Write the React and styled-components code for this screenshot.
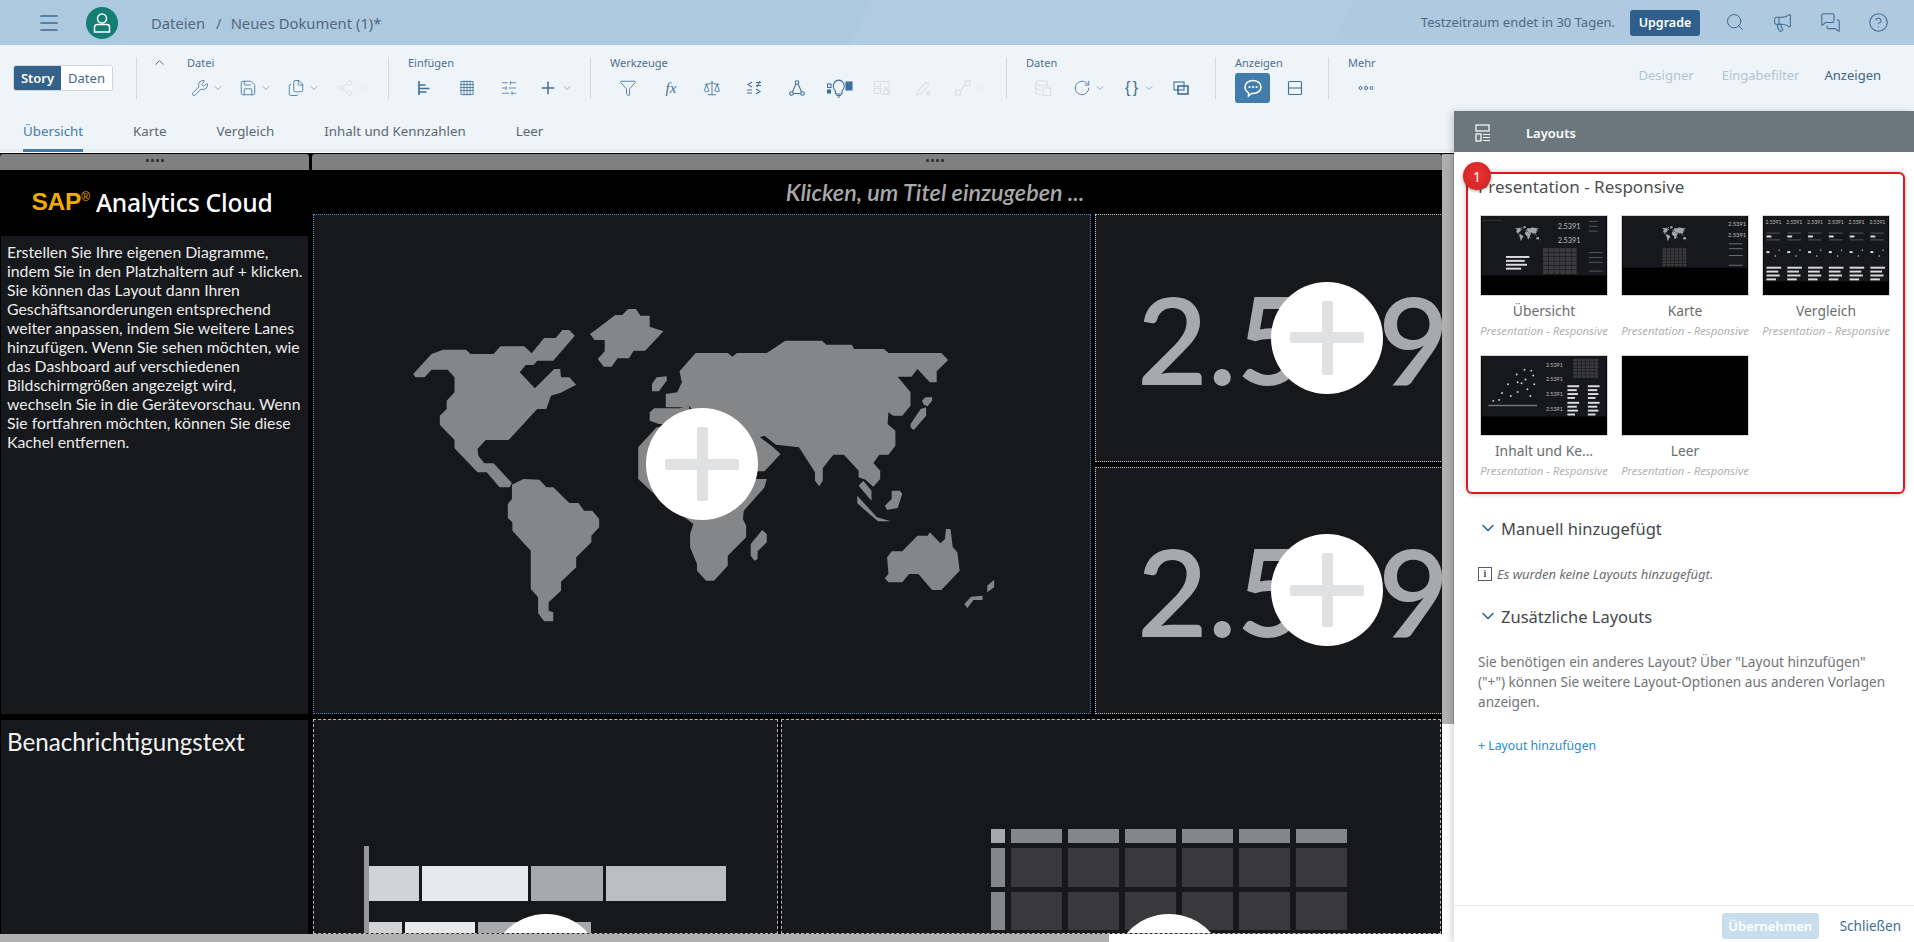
import styled, { createGlobalStyle } from "styled-components";
import {
  ChevronDown,
  ChevronUp,
  CircleHelp,
  Files,
  Menu,
  Megaphone,
  MessagesSquare,
  Plus,
  Save,
  Search,
  Share2,
  Scale,
  SlidersHorizontal,
  Wrench,
  Funnel,
  RotateCw,
} from "lucide-react";

const UI_FONT = `"Noto Sans", "Open Sans", sans-serif`;
const CANVAS_FONT = `Lato, "Noto Sans", sans-serif`;

const GlobalStyle = createGlobalStyle`
  html, body {
    margin: 0;
    padding: 0;
    background: #fff;
    font-family: ${UI_FONT};
    overflow: hidden;
  }
  * { box-sizing: border-box; }
`;

const continents = [
  "220,280 260,220 285,207 335,207 345,220 395,220 410,197 462,197 478,218 505,172 530,172 545,148 560,148 572,165 525,240 490,240 482,253 465,253 452,275 485,323 527,265 540,265 542,290 560,290 575,312 540,337 520,345 510,385 490,385 428,478 378,478 360,505 362,525 375,548 395,548 435,607 430,620 408,620 380,575 360,575 310,503 310,478 278,432 278,405 293,385 293,360 310,335 310,290 295,267 260,267 245,290 225,290",
  "605,160 625,140 660,103 675,103 688,85 705,85 715,105 735,105 735,138 765,152 725,210 700,210 690,233 665,233 652,258 635,258 622,235 637,212 637,178 615,178",
  "435,612 460,595 495,597 510,620 525,620 560,667 580,667 592,690 610,690 625,715 625,740 608,765 608,785 575,830 575,860 542,903 542,930 515,965 515,990 525,995 525,1022 505,1022 492,997 492,950 476,925 476,810 436,750 436,725 426,712 426,670 435,655",
  "800,272 835,217 905,217 915,228 925,217 990,217 1030,180 1110,180 1120,192 1175,192 1180,205 1245,205 1255,217 1370,217 1385,238 1360,272 1360,305 1345,305 1318,265 1305,288 1275,288 1303,335 1303,375 1285,405 1265,405 1255,395 1253,430 1270,450 1270,495 1255,522 1235,522 1222,547 1237,570 1237,595 1222,618 1205,597 1190,590 1190,570 1158,522 1135,522 1112,562 1112,600 1104,617 1095,600 1095,575 1060,500 1010,492 985,465 975,470 1000,495 1020,520 985,572 960,572 900,500 850,420 820,375 810,380 770,380 770,340 795,335 805,305",
  "735,395 745,383 800,383 820,375 830,430 755,430 735,420",
  "750,440 710,500 710,595 745,640 830,730 823,760 823,800 838,850 838,870 858,900 875,900 905,855 905,825 945,770 945,735 938,715 940,690 985,620 990,595 965,595 900,500 800,430",
  "740,310 750,290 772,287 772,300 755,332 740,332",
  "1328,360 1335,350 1350,350 1350,360 1340,377 1332,372",
  "1303,430 1325,385 1337,380 1337,405 1310,448 1303,440",
  "1200,600 1218,630 1218,660 1190,615",
  "1187,645 1230,710 1260,722 1232,722 1187,668",
  "1247,675 1262,655 1262,630 1280,630 1285,640 1275,682 1252,688",
  "955,790 980,748 990,760 990,785 970,812 970,835 963,840 955,825",
  "1252,830 1262,812 1285,812 1318,765 1340,765 1345,755 1368,788 1378,775 1380,745 1390,745 1395,800 1405,815 1410,870 1370,928 1350,928 1320,880 1300,880 1285,905 1255,905 1247,893 1255,880",
  "1420,970 1435,948 1460,945 1460,958 1440,958 1427,982",
  "1470,935 1470,915 1485,897 1485,920",
];

const Page = styled.div`
  width: 1914px;
  height: 942px;
  display: flex;
  flex-direction: column;
  overflow: hidden;
  background: #fff;
`;

const TopBar = styled.header`
  height: 45px;
  flex: none;
  display: flex;
  align-items: center;
  padding-left: 37px;
  background: linear-gradient(115deg, #adc9e0 0 45%, #b1cbe2 45% 70%, #aec9e0 70%);
  color: #50687f;
  font-size: 14.8px;
`;

const MenuBtn = styled.span`
  display: flex;
  color: #3f6a90;
  margin-right: 25px;
`;

const Avatar = styled.span`
  width: 32px;
  height: 32px;
  border-radius: 50%;
  background: #147d74;
  color: #fff;
  display: flex;
  align-items: center;
  justify-content: center;
  margin-right: 33px;
`;

const Crumb = styled.span`
  margin-right: ${(p) => p.$gap || 0}px;
  color: #53687c;
`;

const TopRight = styled.div`
  margin-left: auto;
  display: flex;
  align-items: center;
  color: #4e6a85;
`;

const Trial = styled.span`
  font-size: 13px;
  margin-right: 15px;
  margin-top: -2px;
`;

const UpgradeBtn = styled.button`
  width: 70px;
  height: 26px;
  border: 0;
  border-radius: 3px;
  background: #2f5f8a;
  color: #fff;
  font: 600 12.5px ${UI_FONT};
  margin-right: 25px;
`;

const TopIcons = styled.div`
  display: flex;
  gap: 27px;
  margin-right: 25px;
  color: #3f6a90;
`;

const Toolbar = styled.div`
  height: 66px;
  flex: none;
  display: flex;
  background: #eff4f9;
  padding-top: 10px;
`;

const Segmented = styled.div`
  display: flex;
  height: 26px;
  margin: 10px 23px 0 13px;
  width: 100px;
  border: 1px solid #cfd6dc;
  border-radius: 3px;
  overflow: hidden;
  font-size: 13px;
`;

const SegItem = styled.span`
  flex: ${(p) => (p.$active ? "0 0 47px" : "1")};
  display: flex;
  align-items: center;
  justify-content: center;
  background: ${(p) => (p.$active ? "#346187" : "#fff")};
  color: ${(p) => (p.$active ? "#fff" : "#3f6a90")};
  font-weight: ${(p) => (p.$active ? 600 : 400)};
`;

const ToolGroup = styled.section`
  width: ${(p) => p.$w}px;
  flex: none;
  height: 42px;
  margin-top: 2px;
  border-left: 1px solid #d3dae0;
  padding-left: ${(p) => p.$pad || 19}px;
  position: relative;
`;

const GroupLabel = styled.div`
  font-size: 11px;
  line-height: 12px;
  color: #4e6f8f;
  height: 15px;
  margin-top: -2px;
  display: flex;
  align-items: center;
`;

const Caret = styled.span`
  display: flex;
  color: #3f6a90;
  width: 35px;
  margin-left: -4px;
`;

const IconRow = styled.div`
  display: flex;
  align-items: center;
  height: 32px;
  margin-top: 2px;
  margin-left: ${(p) => p.$x}px;
`;

const Slot = styled.span`
  width: ${(p) => p.$w}px;
  flex: none;
  display: flex;
  align-items: center;
  gap: 3px;
  color: ${(p) => (p.$off ? "#d8e0e8" : "#3f6f9a")};

  svg {
    flex: none;
  }
`;

const SlotText = styled.span`
  width: 18px;
  text-align: center;
  white-space: nowrap;
  font: ${(p) => (p.$italic ? "italic" : "normal")} 15px "Liberation Serif", serif;
  line-height: 18px;
`;

const BraceText = styled.span`
  width: 18px;
  text-align: center;
  white-space: nowrap;
  font: 16px/18px "Liberation Sans", sans-serif;
  letter-spacing: -1px;
`;

const ActiveBtn = styled.span`
  width: 35px;
  height: 30px;
  border-radius: 3px;
  background: #427cac;
  color: #fff;
  display: flex;
  align-items: center;
  justify-content: center;
  margin-right: 16px;
`;

const ModeLinks = styled.nav`
  margin-left: auto;
  display: flex;
  gap: 28px;
  padding: 11px 33px 0 0;
  font-size: 13px;
`;

const ModeLink = styled.span`
  color: ${(p) => (p.$on ? "#3e6587" : "#b3c3d1")};
  margin-right: ${(p) => p.$mr || 0}px;
`;

const Workspace = styled.div`
  flex: 1;
  min-height: 0;
  display: flex;
`;

const Main = styled.main`
  width: 1454px;
  flex: none;
  display: flex;
  flex-direction: column;
`;

const Tabs = styled.div`
  height: 41px;
  flex: none;
  display: flex;
  gap: 50px;
  padding-left: 23px;
  background: #eff4f9;
  font-size: 13.3px;
  border-bottom: 3px solid #e3ecf2;
`;

const Tab = styled.span`
  height: 41px;
  line-height: 40px;
  color: ${(p) => (p.$active ? "#427cac" : "#5b6770")};
  border-bottom: ${(p) => (p.$active ? "3px solid #427cac" : "0")};
`;

const CanvasArea = styled.div`
  flex: 1;
  min-height: 0;
  display: flex;
  flex-direction: column;
  background: #000;
  border-top: 1px solid #fff;
`;

const CanvasRow = styled.div`
  flex: 1;
  min-height: 0;
  display: flex;
  padding-top: 1px;
`;

const Lanes = styled.div`
  width: 1442px;
  flex: none;
  display: flex;
  gap: 3px;
  overflow: hidden;
`;

const Lane = styled.div`
  width: ${(p) => p.$w}px;
  flex: none;
  display: flex;
  flex-direction: column;
  overflow: hidden;
`;

const LaneHandle = styled.div`
  height: 16px;
  flex: none;
  background: #808080;
  border-radius: 3px 3px 0 0;
  display: flex;
  align-items: center;
  justify-content: center;
  gap: 2px;
  padding-bottom: 3px;
  padding-left: ${(p) => p.$shift || 0}px;
`;

const HandleDot = styled.i`
  width: 3px;
  height: 3px;
  background: #333;
  border-radius: 1px;
`;

const LogoBand = styled.div`
  height: 66px;
  flex: none;
  background: #000;
  display: flex;
  align-items: center;
  justify-content: center;
  padding: 0 5px 2px 0;
  margin: 0 1px;
  color: #fff;
  font: 500 24.6px "Noto Sans", sans-serif;
  letter-spacing: -0.2px;
`;

const SapMark = styled.span`
  color: #f0ab00;
  font: 700 24.5px "Liberation Sans", sans-serif;
  margin-right: 6px;

  sup {
    font-size: 12px;
    line-height: 0;
    font-weight: 400;
    vertical-align: 9px;
  }
`;

const DarkBlock = styled.div`
  background: #16181b;
  flex: ${(p) => (p.$grow ? 1 : "none")};
  height: ${(p) => (p.$h ? `${p.$h}px` : "auto")};
  margin: 0 1px;
  padding: ${(p) => p.$pad || "6px 3px 6px 6px"};
  color: #ececec;
  font: 15.8px/19px ${CANVAS_FONT};
`;

const NoticeTitle = styled.div`
  font: 24.2px/28px ${CANVAS_FONT};
  color: #f2f2f2;
`;

const Divider = styled.div`
  height: 6px;
  flex: none;
  background: #000;
`;

const TitleBand = styled.div`
  height: 44px;
  flex: none;
  background: #000;
  display: flex;
  align-items: center;
  justify-content: center;
  padding-left: 116px;
  color: #a8a9ab;
  font: italic 600 23.4px ${CANVAS_FONT};
`;

const TopCells = styled.div`
  height: 500px;
  flex: none;
  display: flex;
  gap: 4px;
`;

const MapCell = styled.div`
  width: 778px;
  flex: none;
  margin-left: 1px;
  background: #16181b;
  border: 1px dotted #4a8cc0;
  display: flex;
  align-items: center;
  justify-content: center;
  position: relative;
`;

const SideCol = styled.div`
  width: 420px;
  flex: none;
  display: flex;
  flex-direction: column;
  gap: 5px;
`;

const SideCell = styled.div`
  flex: 1;
  background: #16181b;
  border: 1px dotted #c8c8c8;
  display: flex;
  align-items: center;
  padding-left: 41px;
  position: relative;
  overflow: hidden;
`;

const BigNumber = styled.span`
  font: 600 122px/1 ${CANVAS_FONT};
  color: #a7a9ac;
  white-space: nowrap;
`;

const AddBubble = styled.div`
  position: absolute;
  width: 112px;
  height: 112px;
  border-radius: 50%;
  background: #fff;
  left: ${(p) => p.$left};
  top: ${(p) => p.$top};
  transform: translate(-50%, -50%);
  color: #e0e1e3;
  display: flex;
  align-items: center;
  justify-content: center;

  &::before,
  &::after {
    content: "";
    position: absolute;
    background: currentColor;
    border-radius: 2px;
  }
  &::before {
    width: 74px;
    height: 11px;
  }
  &::after {
    width: 11px;
    height: 74px;
  }
`;

const BottomCells = styled.div`
  flex: 1;
  min-height: 0;
  display: flex;
  gap: 3px;
  padding-top: 5px;
`;

const ChartCell = styled.div`
  width: ${(p) => p.$w}px;
  flex: none;
  margin-left: ${(p) => p.$ml || 0}px;
  background: #16181b;
  border: 1px dashed #b5b5b5;
  padding: ${(p) => p.$pad};
  position: relative;
  overflow: hidden;
`;

const BarChart = styled.div`
  height: 200px;
  border-left: 5px solid #969696;
  padding-top: 20px;
  display: flex;
  flex-direction: column;
  gap: 21px;
`;

const BarRow = styled.div`
  display: flex;
  gap: 3px;
  height: 35px;
  flex: none;
`;

const BarSeg = styled.span`
  width: ${(p) => p.$w}px;
  flex: none;
  background: ${(p) => p.$c};
`;

const MiniTable = styled.div`
  display: grid;
  grid-template-columns: 14px repeat(6, 51px);
  grid-template-rows: 14px 39px 38px;
  gap: 5px 6px;
`;

const TableCell = styled.span`
  background: ${(p) => p.$c};
`;

const HScroll = styled.div`
  height: 8px;
  flex: none;
  background: linear-gradient(90deg, #b0b0b0 0 1109px, #fff 1109px);
`;

const VScroll = styled.div`
  width: 12px;
  flex: none;
  background: #fff;
`;

const VThumb = styled.div`
  height: 570px;
  background: #b0b0b0;
  border-right: 1px solid #999;
`;

const Panel = styled.aside`
  flex: 1;
  display: flex;
  flex-direction: column;
  background: #fff;
  box-shadow: -3px 0 6px rgba(0, 0, 0, 0.15);
  z-index: 1;
`;

const PanelHeader = styled.div`
  height: 41px;
  flex: none;
  background: #6c777d;
  color: #fff;
  display: flex;
  align-items: center;
  padding: 2px 0 0 21px;
  font-size: 13px;
  font-weight: 600;
  gap: 35px;
`;

const PanelBody = styled.div`
  flex: 1;
  padding: 20px 9px 0 12px;
`;

const RedBox = styled.div`
  height: 322px;
  position: relative;
  border: 2px solid #e6141c;
  border-radius: 6px;
  box-shadow: 0 0 5px rgba(0, 0, 0, 0.25);
  padding: 1px 0 0 10px;
`;

const Badge = styled.span`
  position: absolute;
  left: -5px;
  top: -12px;
  width: 28px;
  height: 28px;
  border-radius: 50%;
  background: radial-gradient(circle at 50% 45%, #e83333, #cf1f1f);
  box-shadow: 0 1px 3px rgba(0, 0, 0, 0.4);
  color: #fff;
  font-size: 14px;
  display: flex;
  align-items: center;
  justify-content: center;
`;

const BoxTitle = styled.h3`
  margin: 0 0 16px;
  font-size: 17px;
  line-height: 24px;
  font-weight: 400;
  color: #4b4f52;
`;

const ThumbGrid = styled.div`
  display: grid;
  grid-template-columns: repeat(3, 128px);
  grid-auto-rows: 140px;
  column-gap: 13px;
  margin-left: 2px;
`;

const ThumbCard = styled.div`
  text-align: center;
`;

const ThumbFrame = styled.svg`
  display: block;
  width: 128px;
  height: 81px;
  border: 1px solid #d5d5d5;
  background: #000;
`;

const ThumbName = styled.div`
  font-size: 13.8px;
  line-height: 18px;
  margin-top: 6px;
  color: #6a6d70;
  white-space: nowrap;
`;

const ThumbSub = styled.div`
  font-size: 11.3px;
  line-height: 14px;
  margin-top: 4px;
  font-style: italic;
  color: #b0b2b4;
  white-space: nowrap;
`;

const SectionHead = styled.div`
  display: flex;
  align-items: center;
  gap: 3px;
  margin-left: ${(p) => p.$ml || 0}px;
  margin-top: ${(p) => p.$mt}px;
  height: 26px;
  font-size: 16.5px;
  color: #45494c;

  svg {
    color: #2f5f8a;
    flex: none;
  }
`;

const Indented = styled.div`
  padding-left: 12px;
`;

const InfoLine = styled.div`
  display: flex;
  align-items: center;
  gap: 5px;
  margin-top: 24px;
  height: 18px;
  font-size: 13px;
  font-style: italic;
  color: #6a6d70;
`;

const InfoBox = styled.span`
  width: 14px;
  height: 14px;
  border: 1px solid #5a5e61;
  font: 700 10px/12px "Liberation Serif", serif;
  font-style: normal;
  text-align: center;
  color: #45494c;
`;

const HelpText = styled.p`
  margin: 23px 0 0;
  font-size: 13.6px;
  line-height: 20px;
  color: #717477;
`;

const AddLink = styled.div`
  margin-top: 25px;
  font-size: 12.3px;
  line-height: 18px;
  color: #2a8bd0;
`;

const PanelFooter = styled.div`
  height: 37px;
  flex: none;
  border-top: 1px solid #e4e6e8;
  display: flex;
  align-items: center;
  justify-content: flex-end;
  gap: 21px;
  padding: 3px 13px 0 0;
  font-size: 13.5px;
`;

const ApplyBtn = styled.button`
  width: 97px;
  height: 26px;
  border: 0;
  border-radius: 3px;
  background: #c9dded;
  color: #fff;
  font: 600 13px ${UI_FONT};
`;

const CloseLink = styled.span`
  color: #3a6d97;
`;

const Person = () => (
  <svg width="20" height="22" viewBox="0 0 20 22" fill="none" stroke="currentColor" strokeWidth="1.5">
    <circle cx="10" cy="6.5" r="4.5" />
    <path d="M5 12.5 h10 a2.5 2.5 0 0 1 2.5 2.5 v5 h-15 v-5 a2.5 2.5 0 0 1 2.5-2.5z" />
  </svg>
);

const Line = ({ children, size = 18, w = 1.1 }) => (
  <svg width={size} height={size} viewBox="0 0 18 18" fill="none" stroke="currentColor" strokeWidth={w}>
    {children}
  </svg>
);

const Chev = () => <ChevronDown size={12} strokeWidth={1} />;

const SlotIcon = ({ icon: Icon, chev }) => (
  <>
    <Icon size={18} strokeWidth={1.1} />
    {chev && <Chev />}
  </>
);

const BarsIcon = () => (
  <Line>
    <path d="M4 2v14M4.5 6h6M4.5 9.5h10M4.5 13h7" strokeWidth="1.6" />
  </Line>
);

const GridIcon = () => (
  <Line w={0.8}>
    <rect x="3" y="2.5" width="12" height="13" />
    <path d="M6 1.5v15M9 1.5v15M12 1.5v15M2 5.5h14M2 8.5h14M2 11.5h14" />
  </Line>
);

const NodesIcon = () => (
  <Line>
    <circle cx="9" cy="3.5" r="1.8" />
    <circle cx="3.5" cy="14.5" r="1.8" />
    <circle cx="14.5" cy="14.5" r="1.8" />
    <path d="M8 5l-3.6 8M10 5l3.6 8M5.3 14.5h7.4" />
  </Line>
);

const CompareIcon = () => (
  <Line>
    <path d="M7 3L3 5.5L7 8M11 3.5h5M11 6.5h5M15 2l-3 6M2 11h5M2 14h5M11 10l4 2.5l-4 2.5" />
  </Line>
);

const InsightIcon = () => (
  <svg width="26" height="20" viewBox="0 0 26 20" fill="none" stroke="currentColor" strokeWidth="1.1">
    <rect x="0.5" y="6" width="3.5" height="3.5" />
    <rect x="0.5" y="12" width="3" height="3" fill="currentColor" />
    <path d="M8.5 13a5.5 6 0 1 1 6.5 0v3h-6.5zM9.5 17.5h4.5M10.5 19h2.5" />
    <rect x="19" y="4" width="6" height="8" fill="currentColor" />
  </svg>
);

const TileLockIcon = () => (
  <Line>
    <rect x="1.5" y="2.5" width="6" height="5" />
    <rect x="1.5" y="9.5" width="6" height="5" />
    <path d="M9 2.5h7v13h-7M11 11h4v4h-4zM12 11v-2a1 1 0 0 1 2 0v2" />
  </Line>
);

const PenOffIcon = () => (
  <Line>
    <path d="M3 16l1-4 8-9 3 2.5-8 9zM12 12l4 4M16 12l-4 4" />
  </Line>
);

const LinkBoxesIcon = () => (
  <Line>
    <rect x="1.5" y="11" width="5" height="5" />
    <rect x="11" y="2" width="5" height="5" />
    <path d="M6.5 12l4.5-6" />
  </Line>
);

const DbIcon = () => (
  <Line>
    <ellipse cx="7.5" cy="4" rx="6" ry="2.5" />
    <path d="M1.5 4v9c0 1.5 2.5 2.5 5 2.5M1.5 8.5c0 1.5 3 2.5 6 2.5M13.5 4v4" />
    <rect x="9" y="9" width="7.5" height="7.5" />
  </Line>
);

const OverlapIcon = () => (
  <Line>
    <rect x="2" y="3" width="10" height="8" />
    <rect x="6" y="7" width="10" height="8" strokeWidth="1.6" />
  </Line>
);

const SplitIcon = () => (
  <Line>
    <rect x="2.5" y="2.5" width="13" height="13" rx="1" />
    <path d="M2.5 9h13" />
  </Line>
);

const CommentIcon = () => (
  <svg width="20" height="20" viewBox="0 0 20 20" fill="none" stroke="currentColor" strokeWidth="1.5">
    <path d="M10 2.5c4.5 0 8 2.7 8 6.5s-3.5 6.5-8 6.5h-1.5l-3 2.5v-3.3C3.5 13.5 2 11.5 2 9c0-3.8 3.5-6.5 8-6.5z" />
    <path d="M6.5 9h.1M10 9h.1M13.5 9h.1" strokeWidth="2.2" strokeLinecap="round" />
  </svg>
);

const DotsIcon = () => (
  <svg width="18" height="18" viewBox="0 0 18 18" fill="none" stroke="currentColor" strokeWidth="1">
    <circle cx="3.5" cy="9" r="1.5" />
    <circle cx="9" cy="9" r="1.5" />
    <circle cx="14.5" cy="9" r="1.5" />
  </svg>
);

const PanelLayoutIcon = () => (
  <svg width="16" height="18" viewBox="0 0 16 18" fill="none" stroke="currentColor" strokeWidth="1.2">
    <rect x="1" y="1" width="13" height="6" />
    <rect x="1" y="10" width="5" height="7" />
    <path d="M8 10.5h7M8 13.5h7M8 16.5h7" />
  </svg>
);

const MiniMap = ({ x, y, w, h }) => (
  <svg x={x} y={y} width={w} height={h} viewBox="200 70 1300 960" preserveAspectRatio="none">
    {continents.map((pts) => (
      <polygon key={pts} points={pts} fill="#a5a6a8" />
    ))}
  </svg>
);

const MiniNum = ({ x, y, size = 7.5 }) => (
  <text x={x} y={y} fontSize={size} fill="#bdbec0" fontFamily="Lato, sans-serif">
    2.5391
  </text>
);

const MiniGrid = ({ x, y, w, h }) => {
  const cells = [];
  const cols = 6;
  const rows = 6;
  for (let r = 0; r < rows; r++) {
    for (let c = 0; c < cols; c++) {
      cells.push(
        <rect
          key={`${r}-${c}`}
          x={x + (c * w) / cols}
          y={y + (r * h) / rows}
          width={w / cols - 0.6}
          height={h / rows - 0.6}
          fill="#3b3b3d"
        />
      );
    }
  }
  return <g>{cells}</g>;
};

const MiniBars = ({ x, y, w = 24 }) => (
  <g fill="#dcdcdc">
    <rect x={x} y={y} width={w} height="2" />
    <rect x={x} y={y + 4} width={w * 0.8} height="2" />
    <rect x={x} y={y + 8} width={w * 0.9} height="2" />
    <rect x={x} y={y + 12} width={w * 0.65} height="2" />
  </g>
);

const OverviewThumb = () => (
  <ThumbFrame viewBox="0 0 128 81">
    <rect width="128" height="61" fill="#16181b" />
    <rect x="1" y="4" width="20" height="0.5" fill="#55565a" />
    <MiniMap x={34} y={10} w={27} h={16} />
    <MiniNum x={78} y={13} />
    <MiniNum x={78} y={28} />
    <MiniBars x={25} y={41} />
    <MiniGrid x={63} y={33} w={35} h={27} />
    <g fill="#55565a">
      <rect x="110" y="5" width="9" height="1" />
      <rect x="110" y="10" width="9" height="1" />
      <rect x="110" y="15" width="9" height="1" />
      <rect x="110" y="37" width="14" height="1" />
      <rect x="110" y="42" width="14" height="1" />
      <rect x="110" y="47" width="14" height="1" />
      <rect x="110" y="56" width="14" height="1" />
    </g>
  </ThumbFrame>
);

const MapThumb = () => (
  <ThumbFrame viewBox="0 0 128 81">
    <rect width="128" height="53" fill="#16181b" />
    <MiniMap x={40} y={10} w={27} h={16} />
    <MiniNum x={108} y={10} size={6} />
    <MiniNum x={108} y={22} size={6} />
    <MiniGrid x={41} y={33} w={25} h={19} />
    <g fill="#6e6f72">
      <rect x="109" y="28" width="14" height="1" />
      <rect x="109" y="33" width="14" height="1" />
      <rect x="109" y="40" width="14" height="1" />
      <rect x="109" y="50" width="14" height="1" />
    </g>
  </ThumbFrame>
);

const CompareThumb = () => (
  <ThumbFrame viewBox="0 0 128 81">
    <rect width="128" height="67" fill="#16181b" />
    {[0, 1, 2, 3, 4, 5].map((i) => (
      <g key={i} transform={`translate(${i * 21.3} 0)`}>
        <MiniNum x={2} y={8} size={5.2} />
        <rect x="3" y="17" width="14" height="1" fill="#55565a" />
        <rect x="3" y="20" width="5" height="2" fill="#dcdcdc" />
        <rect x="3" y="24" width="14" height="1" fill="#55565a" />
        <rect x="3" y="36" width="3" height="2" fill="#dcdcdc" />
        <circle cx="16" cy="35" r="0.7" fill="#dcdcdc" />
        <circle cx="12" cy="41" r="0.7" fill="#dcdcdc" />
        <MiniBars x={3} y={52} w={15} />
      </g>
    ))}
  </ThumbFrame>
);

const dots = [[44, 14], [51, 15], [36, 19], [37, 27], [41, 28], [47, 34], [54, 29], [53, 20], [27, 29], [21, 38], [37, 37], [50, 41], [12, 46], [18, 45], [30, 41], [45, 24]];

const ContentThumb = () => (
  <ThumbFrame viewBox="0 0 128 81">
    <rect width="128" height="62" fill="#16181b" />
    {dots.map(([x, y]) => (
      <circle key={`${x}-${y}`} cx={x} cy={y} r="1" fill="#d0d0d0" />
    ))}
    <rect x="7" y="50" width="50" height="1.5" fill="#77787a" />
    <MiniNum x={66} y={11} size={5.5} />
    <MiniNum x={66} y={26} size={5.5} />
    <MiniNum x={66} y={41} size={5.5} />
    <MiniNum x={66} y={56} size={5.5} />
    <MiniGrid x={94} y={3} w={26} h={20} />
    <MiniBars x={88} y={30} w={12} />
    <MiniBars x={109} y={30} w={12} />
    <MiniBars x={88} y={47} w={12} />
    <MiniBars x={109} y={47} w={12} />
  </ThumbFrame>
);

const EmptyThumb = () => <ThumbFrame viewBox="0 0 128 81" />;

const layouts = [
  { name: "Übersicht", Thumb: OverviewThumb },
  { name: "Karte", Thumb: MapThumb },
  { name: "Vergleich", Thumb: CompareThumb },
  { name: "Inhalt und Ke...", Thumb: ContentThumb },
  { name: "Leer", Thumb: EmptyThumb },
];

const barRows = [
  [[50, "#d2d3d5"], [106, "#e8e9ea"], [72, "#a7a9ac"], [120, "#bcbdbf"]],
  [[33, "#d2d3d5"], [70, "#e8e9ea"], [113, "#a7a9ac"]],
];

const tableCells = Array.from({ length: 21 }, (_, i) => {
  if (i === 0) return "#a7a9ac";
  if (i < 7 || i % 7 === 0) return "#858687";
  return "#39393b";
});

const Handle = ({ shift }) => (
  <LaneHandle $shift={shift}>
    <HandleDot />
    <HandleDot />
    <HandleDot />
    <HandleDot />
  </LaneHandle>
);

const App = () => {
  return (
    <Page>
      <GlobalStyle />
      <TopBar>
        <MenuBtn>
          <Menu size={24} strokeWidth={1.7} />
        </MenuBtn>
        <Avatar>
          <Person />
        </Avatar>
        <Crumb $gap={11}>Dateien</Crumb>
        <Crumb $gap={9}>/</Crumb>
        <Crumb>Neues Dokument (1)*</Crumb>
        <TopRight>
          <Trial>Testzeitraum endet in 30 Tagen.</Trial>
          <UpgradeBtn>Upgrade</UpgradeBtn>
          <TopIcons>
            <Search size={20} strokeWidth={1.2} />
            <Megaphone size={21} strokeWidth={1.2} />
            <MessagesSquare size={21} strokeWidth={1.2} />
            <CircleHelp size={21} strokeWidth={1.2} />
          </TopIcons>
        </TopRight>
      </TopBar>

      <Toolbar>
        <Segmented>
          <SegItem $active>Story</SegItem>
          <SegItem>Daten</SegItem>
        </Segmented>
        <ToolGroup $w={252} $pad={19}>
          <GroupLabel>
            <Caret>
              <ChevronUp size={15} strokeWidth={1.5} />
            </Caret>
            Datei
          </GroupLabel>
          <IconRow $x={35}>
            <Slot $w={48}><SlotIcon icon={Wrench} chev /></Slot>
            <Slot $w={48}><SlotIcon icon={Save} chev /></Slot>
            <Slot $w={49}><SlotIcon icon={Files} chev /></Slot>
            <Slot $w={40} $off><SlotIcon icon={Share2} chev /></Slot>
          </IconRow>
        </ToolGroup>
        <ToolGroup $w={202}>
          <GroupLabel>Einfügen</GroupLabel>
          <IconRow $x={7}>
            <Slot $w={43}><BarsIcon /></Slot>
            <Slot $w={42}><GridIcon /></Slot>
            <Slot $w={38}><SlidersHorizontal size={18} strokeWidth={1} /></Slot>
            <Slot $w={40}><Plus size={20} strokeWidth={1.8} /><Chev /></Slot>
          </IconRow>
        </ToolGroup>
        <ToolGroup $w={416}>
          <GroupLabel>Werkzeuge</GroupLabel>
          <IconRow $x={9}>
            <Slot $w={43}><Funnel size={18} strokeWidth={1.1} /></Slot>
            <Slot $w={41}><SlotText $italic>fx</SlotText></Slot>
            <Slot $w={42}><Scale size={18} strokeWidth={1.1} /></Slot>
            <Slot $w={43}><CompareIcon /></Slot>
            <Slot $w={39}><NodesIcon /></Slot>
            <Slot $w={46}><InsightIcon /></Slot>
            <Slot $w={41} $off><TileLockIcon /></Slot>
            <Slot $w={40} $off><PenOffIcon /></Slot>
            <Slot $w={40} $off><LinkBoxesIcon /><Chev /></Slot>
          </IconRow>
        </ToolGroup>
        <ToolGroup $w={209}>
          <GroupLabel>Daten</GroupLabel>
          <IconRow $x={8}>
            <Slot $w={39} $off><DbIcon /></Slot>
            <Slot $w={49}><RotateCw size={18} strokeWidth={1.1} /><Chev /></Slot>
            <Slot $w={50}><BraceText>{"{ }"}</BraceText><Chev /></Slot>
            <Slot $w={20}><OverlapIcon /></Slot>
          </IconRow>
        </ToolGroup>
        <ToolGroup $w={113}>
          <GroupLabel>Anzeigen</GroupLabel>
          <IconRow $x={0}>
            <ActiveBtn><CommentIcon /></ActiveBtn>
            <Slot $w={20}><SplitIcon /></Slot>
          </IconRow>
        </ToolGroup>
        <ToolGroup $w={80}>
          <GroupLabel>Mehr</GroupLabel>
          <IconRow $x={9}>
            <Slot $w={20}><DotsIcon /></Slot>
          </IconRow>
        </ToolGroup>
        <ModeLinks>
          <ModeLink>Designer</ModeLink>
          <ModeLink $mr={-3}>Eingabefilter</ModeLink>
          <ModeLink $on>Anzeigen</ModeLink>
        </ModeLinks>
      </Toolbar>

      <Workspace>
        <Main>
          <Tabs>
            <Tab $active>Übersicht</Tab>
            <Tab>Karte</Tab>
            <Tab>Vergleich</Tab>
            <Tab>Inhalt und Kennzahlen</Tab>
            <Tab>Leer</Tab>
          </Tabs>
          <CanvasArea>
            <CanvasRow>
              <Lanes>
                <Lane $w={309}>
                  <Handle />
                  <LogoBand>
                    <SapMark>
                      SAP<sup>®</sup>
                    </SapMark>
                    Analytics Cloud
                  </LogoBand>
                  <DarkBlock $h={478}>
                    Erstellen Sie Ihre eigenen Diagramme, indem Sie in den Platzhaltern auf + klicken. Sie können das
                    Layout dann Ihren Geschäftsanorderungen entsprechend weiter anpassen, indem Sie weitere Lanes
                    hinzufügen. Wenn Sie sehen möchten, wie das Dashboard auf verschiedenen Bildschirmgrößen angezeigt
                    wird,
                    <br />
                    wechseln Sie in die Gerätevorschau. Wenn Sie fortfahren möchten, können Sie diese Kachel entfernen.
                  </DarkBlock>
                  <Divider />
                  <DarkBlock $grow $pad="8px 6px">
                    <NoticeTitle>Benachrichtigungstext</NoticeTitle>
                  </DarkBlock>
                </Lane>
                <Lane $w={1130}>
                  <Handle shift={116} />
                  <TitleBand>Klicken, um Titel einzugeben ...</TitleBand>
                  <TopCells>
                    <MapCell>
                      <svg width="597" height="320" viewBox="200 70 1300 960" preserveAspectRatio="none">
                        {continents.map((pts) => (
                          <polygon key={pts} points={pts} fill="#858688" />
                        ))}
                      </svg>
                      <AddBubble $left="50%" $top="50%" />
                    </MapCell>
                    <SideCol>
                      <SideCell>
                        <BigNumber>2.5391</BigNumber>
                        <AddBubble $left="231px" $top="50%" />
                      </SideCell>
                      <SideCell>
                        <BigNumber>2.5391</BigNumber>
                        <AddBubble $left="231px" $top="50%" />
                      </SideCell>
                    </SideCol>
                  </TopCells>
                  <BottomCells>
                    <ChartCell $w={465} $ml={1} $pad="126px 0 0 50px">
                      <BarChart>
                        {barRows.map((row, r) => (
                          <BarRow key={r}>
                            {row.map(([w, c], i) => (
                              <BarSeg key={i} $w={w} $c={c} />
                            ))}
                          </BarRow>
                        ))}
                      </BarChart>
                      <AddBubble $left="232px" $top="250px" />
                    </ChartCell>
                    <ChartCell $w={660} $pad="109px 0 0 209px">
                      <MiniTable>
                        {tableCells.map((c, i) => (
                          <TableCell key={i} $c={c} />
                        ))}
                      </MiniTable>
                      <AddBubble $left="387px" $top="250px" />
                    </ChartCell>
                  </BottomCells>
                </Lane>
              </Lanes>
              <VScroll>
                <VThumb />
              </VScroll>
            </CanvasRow>
            <HScroll />
          </CanvasArea>
        </Main>

        <Panel>
          <PanelHeader>
            <PanelLayoutIcon />
            Layouts
          </PanelHeader>
          <PanelBody>
            <RedBox>
              <Badge>1</Badge>
              <BoxTitle>Presentation - Responsive</BoxTitle>
              <ThumbGrid>
                {layouts.map(({ name, Thumb }) => (
                  <ThumbCard key={name}>
                    <Thumb />
                    <ThumbName>{name}</ThumbName>
                    <ThumbSub>Presentation - Responsive</ThumbSub>
                  </ThumbCard>
                ))}
              </ThumbGrid>
            </RedBox>
            <SectionHead $mt={21} $ml={12}>
              <ChevronDown size={20} strokeWidth={1.8} />
              Manuell hinzugefügt
            </SectionHead>
            <Indented>
              <InfoLine>
                <InfoBox>i</InfoBox>
                Es wurden keine Layouts hinzugefügt.
              </InfoLine>
            </Indented>
            <SectionHead $mt={20} $ml={12}>
              <ChevronDown size={20} strokeWidth={1.8} />
              Zusätzliche Layouts
            </SectionHead>
            <Indented>
              <HelpText>
                Sie benötigen ein anderes Layout? Über "Layout hinzufügen"
                <br />
                ("+") können Sie weitere Layout-Optionen aus anderen Vorlagen
                <br />
                anzeigen.
              </HelpText>
              <AddLink>+ Layout hinzufügen</AddLink>
            </Indented>
          </PanelBody>
          <PanelFooter>
            <ApplyBtn>Übernehmen</ApplyBtn>
            <CloseLink>Schließen</CloseLink>
          </PanelFooter>
        </Panel>
      </Workspace>
    </Page>
  );
};

export default App;
